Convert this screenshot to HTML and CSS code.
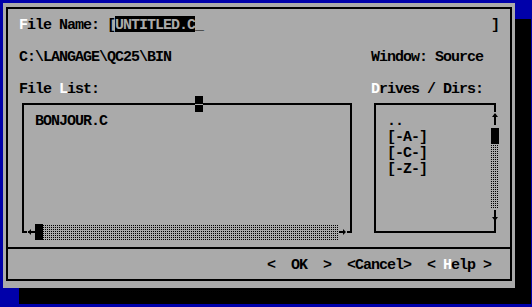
FILE: index.html
```html
<!DOCTYPE html>
<html lang="en">
<head>
    <meta charset="UTF-8">
    <title>Open File</title>
    <link rel="stylesheet" href="styles.css">
</head>
<body>
    <div class="screen">
        <div class="dialog">
            <div class="frame"></div>
            <div class="sep"></div>

            <div class="txt name-label"><span class="hot">F</span>ile Name: [</div>
            <div class="txt name-value">UNTITLED.C</div>
            <div class="txt name-cursor">_</div>
            <div class="txt name-close">]</div>

            <div class="txt path">C:\LANGAGE\QC25\BIN</div>
            <div class="txt window">Window: Source</div>

            <div class="txt list-label">File <span class="hot">L</span>ist:</div>
            <div class="txt dirs-label"><span class="hot">D</span>rives / Dirs:</div>

            <div class="files-box"></div>
            <div class="files-mark"></div>
            <div class="txt files">BONJOUR.C</div>
            <div class="hscroll">
                <svg class="arrow" width="8" height="16" viewBox="0 0 8 16"><rect x="1" y="7" width="7" height="2"/><path d="M1 8 L4 5 L4 11 Z"/></svg>
                <div class="thumb"></div>
                <div class="track"></div>
                <svg class="arrow" width="8" height="16" viewBox="0 0 8 16"><rect x="0" y="7" width="6" height="2"/><path d="M7 8 L4 5 L4 11 Z"/></svg>
            </div>

            <div class="dirs-box"></div>
            <div class="txt dirs">..
[-A-]
[-C-]
[-Z-]</div>
            <div class="vscroll">
                <svg class="arrow" width="8" height="16" viewBox="0 0 8 16"><rect x="3" y="2" width="2" height="11"/><path d="M4 1 L1 5 L7 5 Z"/></svg>
                <div class="thumb"></div>
                <div class="track"></div>
                <svg class="arrow" width="8" height="16" viewBox="0 0 8 16"><rect x="3" y="2" width="2" height="14"/><path d="M4 13 L1 9 L7 9 Z"/></svg>
            </div>

            <div class="txt btn-ok">&lt;  OK  &gt;</div>
            <div class="txt btn-cancel">&lt;Cancel&gt;</div>
            <div class="txt btn-help">&lt; <span class="hot">H</span>elp &gt;</div>
        </div>
    </div>
</body>
</html>
```

FILE: styles.css
```css
body {
    margin: 0;
    background-color: #0000aa;
    font-family: "Liberation Mono", "DejaVu Sans Mono", monospace;
    font-weight: bold;
    font-size: 15px;
    letter-spacing: -1px;
}
.screen {
    height: 307px;
    padding: 3px 0 0 3px;
    box-sizing: border-box;
    overflow: hidden;
}
/* 64 x 18 text cells, 8x16 each (first row is cut by 3px) */
.dialog {
    width: 512px;
    display: grid;
    grid-template-columns: repeat(64, 8px);
    grid-template-rows: 13px repeat(17, 16px);
    background-color: #aaaaaa;
    box-shadow: 16px 16px 0 #000;
    color: #000;
    line-height: 16px;
    white-space: pre;
}
.txt {
    padding-top: 2px;
}
.hot {
    color: #fff;
}
.frame {
    grid-column: 1 / -1;
    grid-row: 1 / -1;
    margin: 4px 3px 7px;
    border: 2px solid #000;
}
.sep {
    grid-column: 1 / -1;
    grid-row: 16;
    align-self: start;
    height: 2px;
    margin: 7px 3px 0;
    background-color: #000;
}

.name-label {
    grid-row: 2;
    grid-column: 3 / span 12;
}
.name-value {
    grid-row: 2;
    grid-column: 15 / span 10;
    background-color: #000;
    color: #aaaaaa;
}
.name-cursor {
    grid-row: 2;
    grid-column: 25;
}
.name-close {
    grid-row: 2;
    grid-column: 62;
}
.path {
    grid-row: 4;
    grid-column: 3 / span 19;
}
.window {
    grid-row: 4;
    grid-column: 47 / span 14;
}
.list-label {
    grid-row: 6;
    grid-column: 3 / span 10;
}
.dirs-label {
    grid-row: 6;
    grid-column: 47 / span 14;
}

.files-box, .dirs-box {
    grid-row: 7 / 16;
    margin: 7px 3px;
    border: 2px solid #000;
}
.files-box {
    grid-column: 3 / 45;
}
.dirs-box {
    grid-column: 47 / 63;
}
.files-mark {
    grid-row: 7;
    grid-column: 25;
    background: linear-gradient(#000 0 8px, #aaaaaa 8px 9px, #000 9px);
}
.files {
    grid-row: 8;
    grid-column: 5 / span 9;
}
.dirs {
    grid-row: 8 / span 4;
    grid-column: 49 / span 5;
}

.arrow {
    display: block;
    flex: none;
    background-color: #aaaaaa;
    fill: #000;
}
.thumb {
    flex: none;
    width: 8px;
    height: 16px;
    background-color: #000;
}
/* light shade: one dark dot in every 2x2 */
.track {
    flex: 1;
    background:
        linear-gradient(#aaaaaa 1px, transparent 1px) 0 0 / 2px 2px,
        linear-gradient(90deg, #000 1px, #aaaaaa 1px) 0 0 / 2px 2px;
}
.hscroll {
    grid-row: 15;
    grid-column: 4 / 44;
    display: flex;
}
.vscroll {
    grid-row: 8 / 15;
    grid-column: 62;
    display: flex;
    flex-direction: column;
}

.btn-ok {
    grid-row: 17;
    grid-column: 34 / span 8;
}
.btn-cancel {
    grid-row: 17;
    grid-column: 44 / span 8;
}
.btn-help {
    grid-row: 17;
    grid-column: 54 / span 8;
}
```
